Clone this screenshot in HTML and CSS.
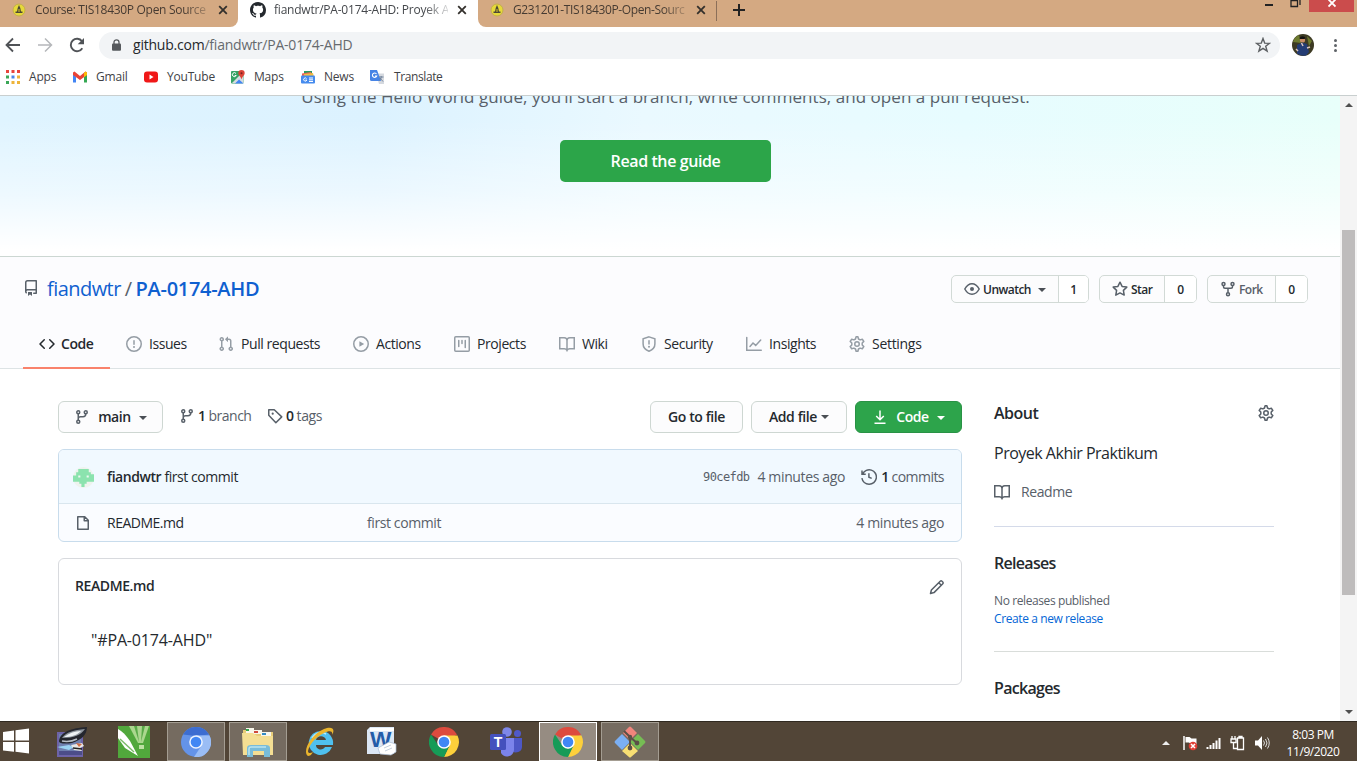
FILE: index.html
```html
<!DOCTYPE html>
<html lang="en">
<head>
<meta charset="utf-8">
<title>fiandwtr/PA-0174-AHD: Proyek Akhir Praktikum</title>
<link rel="stylesheet" href="styles.css">
</head>
<body>
<svg class="defs" aria-hidden="true">
  <symbol id="repo" viewBox="0 0 16 16"><path fill-rule="evenodd" d="M2 2.5A2.5 2.5 0 014.5 0h8.75a.75.75 0 01.75.75v12.5a.75.75 0 01-.75.75h-2.5a.75.75 0 110-1.5h1.75v-2h-8a1 1 0 00-.714 1.7.75.75 0 01-1.072 1.05A2.495 2.495 0 012 11.5v-9zm10.5-1V9h-8c-.356 0-.694.074-1 .208V2.5a1 1 0 011-1h8zM5 12.25v3.25a.25.25 0 00.4.2l1.45-1.087a.25.25 0 01.3 0L8.6 15.7a.25.25 0 00.4-.2v-3.25a.25.25 0 00-.25-.25h-3.5a.25.25 0 00-.25.25z"/></symbol>
  <symbol id="code" viewBox="0 0 16 16"><path d="M4.72 3.22a.75.75 0 011.06 1.06L2.06 8l3.72 3.72a.75.75 0 11-1.06 1.06L.47 8.53a.75.75 0 010-1.06l4.25-4.25zm6.56 0a.75.75 0 10-1.06 1.06L13.94 8l-3.72 3.72a.75.75 0 101.06 1.06l4.25-4.25a.75.75 0 000-1.06l-4.25-4.25z"/></symbol>
  <symbol id="issue" viewBox="0 0 16 16"><path fill-rule="evenodd" d="M8 1.5a6.5 6.5 0 100 13 6.5 6.5 0 000-13zM0 8a8 8 0 1116 0A8 8 0 010 8zm9 3a1 1 0 11-2 0 1 1 0 012 0zm-.25-6.25a.75.75 0 00-1.5 0v3.5a.75.75 0 001.5 0v-3.5z"/></symbol>
  <symbol id="pull" viewBox="0 0 16 16"><path fill-rule="evenodd" d="M7.177 3.073L9.573.677A.25.25 0 0110 .854v4.792a.25.25 0 01-.427.177L7.177 3.427a.25.25 0 010-.354zM3.75 2.5a.75.75 0 100 1.5.75.75 0 000-1.5zm-2.25.75a2.25 2.25 0 113 2.122v5.256a2.251 2.251 0 11-1.5 0V5.372A2.25 2.25 0 011.5 3.25zM11 2.5h-1V4h1a1 1 0 011 1v5.628a2.251 2.251 0 101.5 0V5A2.5 2.5 0 0011 2.5zm1 10.25a.75.75 0 111.5 0 .75.75 0 01-1.5 0zM3.75 12a.75.75 0 100 1.5.75.75 0 000-1.5z"/></symbol>
  <symbol id="play" viewBox="0 0 16 16"><circle class="ln" cx="8" cy="8" r="7.25"/><path d="M6.4 5.2v5.6L11.2 8z"/></symbol>
  <symbol id="project" viewBox="0 0 16 16"><rect class="ln" x=".75" y=".75" width="14.5" height="14.5" rx="1"/><path class="ln" stroke-linecap="round" d="M4.75 4.5v6M8 4.5v3M11.25 4.5v7"/></symbol>
  <symbol id="book" viewBox="0 0 16 16"><path class="ln" d="M.75 1.75h4.5A2.75 2.75 0 018 4.5a2.75 2.75 0 012.75-2.75h4.5v11h-4.5c-1.2 0-2.2.6-2.75 1.75-.55-1.15-1.55-1.75-2.75-1.75H.75zM8 4.5v10"/></symbol>
  <symbol id="shield" viewBox="0 0 16 16"><path class="ln" d="M8 .9l5.900 1.900V8c0 3.300-2 5.700-5.900 7.200C4.100 13.700 2.100 11.300 2.100 8V2.800z"/><path class="ln" stroke-linecap="round" d="M8 4.700v3.300"/><circle cx="8" cy="10.700" r="1"/></symbol>
  <symbol id="graph" viewBox="0 0 16 16"><path class="ln" stroke-linecap="round" d="M.75 1.500v12.750h14.500M4 10.500L7 7l2.700 2.400 5-5.400"/></symbol>
  <symbol id="gear" viewBox="0 0 16 16"><path class="ln" stroke-linejoin="round" d="M7.100.8h1.800l.6 2.200 1.600.9 2.200-.6 1.500 2.100L13.200 7v2l1.600 1.600-1.500 2.100-2.200-.6-1.600.9-.6 2.200H7.100L6.500 13l-1.600-.9-2.200.6-1.500-2.100L2.800 9V7L1.200 5.400l1.500-2.100 2.200.6L6.500 3z"/><circle class="ln" cx="8" cy="8" r="2.250"/></symbol>
  <symbol id="eye" viewBox="0 0 16 16"><path class="ln" d="M.8 8C2.500 4.900 5 2.750 8 2.750S13.500 4.900 15.200 8c-1.700 3.100-4.200 5.250-7.200 5.250S2.500 11.100.8 8z"/><circle cx="8" cy="8" r="2"/></symbol>
  <symbol id="star" viewBox="0 0 16 16"><path class="ln" stroke-linejoin="round" d="M8 1.200l2.100 4.200 4.700.7-3.400 3.300.8 4.700L8 11.900l-4.200 2.200.8-4.700L1.200 6.100l4.700-.7z"/></symbol>
  <symbol id="fork" viewBox="0 0 16 16"><path class="ln" d="M3.500 4.500v1.250c0 .8.700 1.500 1.500 1.500h6c.8 0 1.500-.7 1.500-1.500V4.500M8 7.500v4.250"/><circle class="ln" cx="3.500" cy="2.900" r="1.500"/><circle class="ln" cx="12.500" cy="2.900" r="1.500"/><circle class="ln" cx="8" cy="13.300" r="1.500"/></symbol>
  <symbol id="branch" viewBox="0 0 16 16"><path class="ln" d="M4.250 4.800v6.400M11.750 4.800c0 2-1 3-2.750 3H6.500c-1.500 0-2.250.8-2.250 2"/><circle class="ln" cx="4.250" cy="3.250" r="1.500"/><circle class="ln" cx="11.750" cy="3.250" r="1.500"/><circle class="ln" cx="4.250" cy="12.750" r="1.500"/></symbol>
  <symbol id="tag" viewBox="0 0 16 16"><path class="ln" stroke-linejoin="round" d="M1.750 1.750h5.500l7.500 7.100-5.900 5.900-7.100-7.500z"/><circle cx="5.700" cy="5.700" r="1.100"/></symbol>
  <symbol id="history" viewBox="0 0 16 16"><path class="ln" d="M1.700 4.900A7.200 7.200 0 118 15.200 7.200 7.200 0 01.9 9.200M1 1.500v3.750h3.750M7.900 4.200v4l2.800 1.200"/></symbol>
  <symbol id="file" viewBox="0 0 16 16"><path class="ln" stroke-linejoin="round" d="M2.750 1.750v12.500h10.500v-9L9.750 1.750zM9.250 1.750v4h4"/></symbol>
  <symbol id="pencil" viewBox="0 0 16 16"><path class="ln" stroke-linejoin="round" d="M1.500 14.500l.9-3.500 8.800-8.800a1.300 1.300 0 011.800 0l.8.8a1.300 1.300 0 010 1.800L5 13.600zM9.800 3.700l2.500 2.500"/></symbol>
  <symbol id="download" viewBox="0 0 16 16"><path class="ln" d="M8 1.500v9M4.200 7L8 10.700 11.800 7M2.500 14.200h11"/></symbol>
  <symbol id="cat" viewBox="0 0 16 16"><path d="M8 0C3.580 0 0 3.580 0 8c0 3.540 2.290 6.530 5.470 7.590.4.070.55-.17.55-.38 0-.19-.01-.82-.01-1.490-2.010.37-2.530-.49-2.690-.94-.09-.23-.48-.94-.82-1.130-.28-.15-.68-.52-.01-.53.63-.01 1.080.58 1.230.82.720 1.210 1.870.87 2.330.66.070-.52.280-.87.510-1.070-1.780-.2-3.640-.89-3.640-3.950 0-.87.310-1.590.82-2.150-.08-.2-.36-1.020.08-2.120 0 0 .67-.21 2.200.82.640-.18 1.320-.27 2-.27s1.360.09 2 .27c1.530-1.040 2.200-.82 2.200-.82.440 1.100.16 1.920.08 2.120.51.560.82 1.270.82 2.150 0 3.070-1.870 3.750-3.650 3.950.29.250.54.730.54 1.480 0 1.070-.01 1.930-.01 2.200 0 .21.150.46.550.38A8.010 8.010 0 0016 8c0-4.420-3.580-8-8-8z"/></symbol>
  <symbol id="cross" viewBox="0 0 10 10"><path d="M1.200 1.200l7.600 7.600M8.800 1.200L1.200 8.800" stroke="currentColor" stroke-width="1.800"/></symbol>
  <symbol id="campus" viewBox="0 0 14 14"><circle cx="7" cy="7" r="6" fill="#e6d93a" stroke="#c2ae4c"/><path d="M7 2l1.300 3 .7 3.500h1.500V10h-7V8.500H5L5.700 5z" fill="#4c4935"/><path d="M7 6v3" stroke="#d8c62a"/></symbol>
  <symbol id="chrome" viewBox="0 0 30 30"><path d="M15 15L2 7.500A15 15 0 0128 7.500z" fill="#dd4b3e"/><path d="M15 8.500h13.500A15 15 0 0115 30l5.600-11.700z" fill="#fdd03b"/><path d="M2 7.500l7.400 11L15 22l5.600-3.700L15 30A15 15 0 012 7.500z" fill="#169b57"/><circle cx="15" cy="15" r="6.800" fill="#fff"/><circle cx="15" cy="15" r="5.300" fill="#4187f4"/></symbol>
</svg>

<header class="browser">
  <div class="tabstrip">
    <div class="tab first"><svg class="fav"><use href="#campus"/></svg><span class="tab-name">Course: TIS18430P Open Source</span><svg class="x"><use href="#cross"/></svg></div>
    <div class="tab active"><svg class="fav cat"><use href="#cat"/></svg><span class="tab-name">fiandwtr/PA-0174-AHD: Proyek A</span><svg class="x"><use href="#cross"/></svg></div>
    <div class="tab third"><svg class="fav"><use href="#campus"/></svg><span class="tab-name">G231201-TIS18430P-Open-Sourc</span><svg class="x"><use href="#cross"/></svg></div>
    <span class="sep"></span>
    <svg class="plus" viewBox="0 0 12 12"><path d="M6 0v12M0 6h12" stroke="#222" stroke-width="2"/></svg>
    <div class="caption">
      <span class="min"></span>
      <svg class="restore" viewBox="0 0 11 8"><path d="M1 0v6.500h6.500V.5H1M10 0v5" fill="none" stroke="#222" stroke-width="1.300"/></svg>
      <span class="close"><svg viewBox="0 0 8 8"><path d="M.5-.5l7 7M7.500-.5l-7 7" stroke="#fff" stroke-width="1.800"/></svg></span>
    </div>
  </div>
  <div class="toolbar">
    <svg class="nav" viewBox="0 0 16 16"><path d="M15 8H2M8 1.500L1.500 8 8 14.500" fill="none" stroke="#505357" stroke-width="1.800"/></svg>
    <svg class="nav" viewBox="0 0 16 16"><path d="M1 8h13M8 1.500L14.500 8 8 14.500" fill="none" stroke="#b5b7ba" stroke-width="1.500"/></svg>
    <svg class="nav" viewBox="0 0 16 16"><path d="M13.300 11.200A6.200 6.200 0 1113 4.300" fill="none" stroke="#505357" stroke-width="1.900"/><path d="M15 1v6.300H8.700z" fill="#505357"/></svg>
    <div class="omnibox">
      <svg class="lock" viewBox="0 0 9 12"><path d="M2 5V3.300a2.500 2.500 0 015 0V5" fill="none" stroke="#56595d" stroke-width="1.300"/><rect y="4.500" width="9" height="7.300" rx="1" fill="#56595d"/></svg>
      <span class="url">github.com<i>/fiandwtr/PA-0174-AHD</i></span>
      <svg class="fav-star" viewBox="0 0 16 16"><path d="M8 1.500l1.700 4.600 4.900.2-3.900 3 1.400 4.700L8 11.300 3.900 14l1.400-4.700-3.900-3 4.900-.2z" fill="none" stroke="currentColor" stroke-width="1.400"/></svg>
    </div>
    <svg class="profile" viewBox="0 0 22 22"><circle cx="11" cy="11" r="11" fill="#3d3a23"/><path d="M1 8a10 10 0 016-7l2 8zM15 2l5 5-3 5z" fill="#6d7a2f"/><circle cx="10.500" cy="6" r="2.600" fill="#c98d65"/><path d="M7.500 4a3.500 3.500 0 016 0l-1 1H8z" fill="#111"/><path d="M5 11l5-2.500 5 1.500 2 8-3 3.500a11 11 0 01-9-2z" fill="#243c74"/><path d="M9.500 9l1.500 3M4 15l2 2M15 14l3-1" stroke="#dcc5bd" stroke-width="1.500"/></svg>
    <span class="dots"><b></b><b></b><b></b></span>
  </div>
  <nav class="bookmarks">
    <a><svg viewBox="0 0 14 14"><path d="M0 0h3v3H0zM5.500 0h3v3h-3zM11 0h3v3h-3z" fill="#e8453c"/><path d="M0 5.500h3v3H0z" fill="#3aa757"/><path d="M5.500 5.500h3v3h-3z" fill="#4a86e8"/><path d="M11 5.500h3v3h-3zM11 11h3v3h-3zM5.500 11h3v3h-3z" fill="#eeb43a"/><path d="M0 11h3v3H0z" fill="#3aa757"/></svg>Apps</a>
    <a><svg viewBox="0 0 14 14"><path d="M0 3v9.500h3V7z" fill="#4285f4"/><path d="M14 3v9.500h-3V7z" fill="#34a853"/><path d="M0 2.500L1.500 1.500 7 6l5.500-4.500L14 2.500V5L7 10 0 5z" fill="#ea4335"/><path d="M11 3l1.500-1.500L14 2.500V5l-3 2.200z" fill="#fbbc04"/></svg>Gmail</a>
    <a><svg viewBox="0 0 14 14"><rect y="1.500" width="14" height="11" rx="3" fill="#f01818"/><path d="M5.500 4.500v5l4-2.500z" fill="#fff"/></svg>YouTube</a>
    <a><svg viewBox="0 0 14 14"><rect y="1" width="12.500" height="12.500" rx="1" fill="#37a366"/><path d="M1 13L12 2l.5 11.500z" fill="#d7dce0"/><path d="M4 13.500l4-4 4.500 4z" fill="#4285f4"/><path d="M5 3.500a2 2 0 10.200 2H3.700" fill="none" stroke="#fff"/><path d="M10.500 0a3.200 3.200 0 013.200 3.200c0 2-2.600 3.300-3.200 6-.6-2.700-3.200-4-3.200-6A3.200 3.200 0 0110.500 0z" fill="#dc4437"/><circle cx="10.500" cy="3.200" r="1" fill="#722"/></svg>Maps</a>
    <a><svg viewBox="0 0 14 14"><path d="M3 1h8v5H3z" fill="#2b9c62"/><path d="M1 3.500l9-1.500 1 4H1z" fill="#ea6155"/><path d="M3 4l9-1 1 4H3z" fill="#f4bd42"/><rect y="5.500" width="14" height="8" rx="1" fill="#458bee"/><path d="M5.500 8.500a1.600 1.600 0 10.300 1.500H4.500M8 8h4M8 9.800h4M8 11.500h4" fill="none" stroke="#fff"/></svg>News</a>
    <a><svg viewBox="0 0 14 14"><path d="M6 3.500h8V14H9z" fill="#d5d9df"/><path d="M0 0h7l4 11H1.500A1.500 1.500 0 010 9.500z" fill="#4784e5"/><path d="M6.500 4a2.200 2.200 0 10.200 2H5" fill="none" stroke="#fff" stroke-width="1.100"/><path d="M9 7h4.500M11.200 6v1c0 2-1 3-2 3.500M10 8l3 3.500" fill="none" stroke="#71839b"/></svg>Translate</a>
  </nav>
</header>

<div class="viewport">
  <main class="page">
    <section class="hero">
      <p>Using the Hello World guide, you’ll start a branch, write comments, and open a pull request.</p>
      <a class="guide">Read the guide</a>
    </section>
    <section class="repohead">
      <div class="titlebar">
        <h1><svg class="ic"><use href="#repo"/></svg><a>fiandwtr</a><span class="slash">/</span><b>PA-0174-AHD</b></h1>
        <div class="social">
          <div class="pair watch"><span><svg class="ic"><use href="#eye"/></svg><em>Unwatch</em><i class="caret"></i></span><strong>1</strong></div>
          <div class="pair starred"><span><svg class="ic"><use href="#star"/></svg><em>Star</em></span><strong>0</strong></div>
          <div class="pair forked"><span><svg class="ic"><use href="#fork"/></svg><em>Fork</em></span><strong>0</strong></div>
        </div>
      </div>
      <nav class="repotabs">
        <a class="on"><svg class="ic"><use href="#code"/></svg>Code</a>
        <a><svg class="ic"><use href="#issue"/></svg>Issues</a>
        <a><svg class="ic"><use href="#pull"/></svg>Pull requests</a>
        <a><svg class="ic"><use href="#play"/></svg>Actions</a>
        <a><svg class="ic"><use href="#project"/></svg>Projects</a>
        <a><svg class="ic"><use href="#book"/></svg>Wiki</a>
        <a><svg class="ic"><use href="#shield"/></svg>Security</a>
        <a><svg class="ic"><use href="#graph"/></svg>Insights</a>
        <a><svg class="ic"><use href="#gear"/></svg>Settings</a>
      </nav>
    </section>
    <div class="columns">
      <div class="files">
        <div class="actions">
          <a class="btn main"><svg class="ic"><use href="#branch"/></svg>main<i class="caret"></i></a>
          <span class="stat branches"><svg class="ic"><use href="#branch"/></svg><b>1</b> branch</span>
          <span class="stat"><svg class="ic"><use href="#tag"/></svg><b>0</b> tags</span>
          <a class="btn goto">Go to file</a>
          <a class="btn add">Add file<i class="caret"></i></a>
          <a class="btn green"><svg class="ic"><use href="#download"/></svg>Code<i class="caret"></i></a>
        </div>
        <div class="box">
          <div class="commit">
            <svg class="avatar" viewBox="0 0 20 20"><circle cx="10" cy="10" r="10" fill="#eef3ee"/><path d="M5 2h10v3h2v2h3v7h-7v2h-2v3H8v-3H6v-2H0V8h3V5h2z" fill="#8be3ae"/><path d="M5 8h2v2H5zM13 8h2v2h-2z" fill="#eef8f2"/></svg>
            <span class="msg"><b>fiandwtr</b> first commit</span>
            <span class="sha">90cefdb</span>
            <span class="ago">4 minutes ago</span>
            <span class="count"><svg class="ic"><use href="#history"/></svg><b>1</b> commits</span>
          </div>
          <div class="row">
            <svg class="ic"><use href="#file"/></svg>
            <span class="name">README.md</span>
            <span class="note">first commit</span>
            <span class="ago">4 minutes ago</span>
          </div>
        </div>
        <article class="readme">
          <header><b>README.md</b><svg class="ic"><use href="#pencil"/></svg></header>
          <p>"#PA-0174-AHD"</p>
        </article>
      </div>
      <aside class="side">
        <section class="about">
          <h2>About<svg class="ic"><use href="#gear"/></svg></h2>
          <p>Proyek Akhir Praktikum</p>
          <a><svg class="ic"><use href="#book"/></svg>Readme</a>
        </section>
        <section class="releases">
          <h2>Releases</h2>
          <p>No releases published</p>
          <a>Create a new release</a>
        </section>
        <section class="packages"><h2>Packages</h2></section>
      </aside>
    </div>
  </main>
  <div class="scroll"><i class="up"></i><span class="thumb"></span><i class="down"></i></div>
</div>

<footer class="taskbar">
  <svg class="start" viewBox="0 0 28 26"><path d="M1 4l11-1.500v10H1zM13.500 2.300L27 .5v12H13.500zM1 14h11v9.800L1 22.400zM13.500 14H27v11.500l-13.500-1.700z" fill="#fff"/></svg>
  <div class="apps">
    <span><svg viewBox="0 0 32 32"><path d="M1 6h26v25H1z" fill="#6d63a8"/><path d="M3 8h22v21H3z" fill="#6f7fae"/><path d="M3 25h23v4H3z" fill="#4c4d88"/><path d="M3 15C4 6 15 2 31 1c0 8-6 13-15 16-6 1-13 1-13-2z" fill="#24262e"/><path d="M6 12C10 6 18 4 29 3c-4 6-11 9-23 9z" fill="#8f979f"/><path d="M8 11c5-4 11-6 17-6-4 4-9 6-17 6z" fill="#eef2f5"/><path d="M6 15c5 1 11 0 15-2" fill="none" stroke="#b8bec6" stroke-width="1.500"/><path d="M1 21l12-2 5 2-5 3z" fill="#9bd3f3"/><path d="M15 19l11-2 2 3-4 2 2 3-8-1z" fill="#e9e7e5"/><path d="M20 17l6 1-3 3z" fill="#ce6c42"/><path d="M17 22l9 1" stroke="#222" stroke-width="1.500"/></svg></span>
    <span><svg viewBox="0 0 32 32"><path d="M0 0h32v32H0z" fill="#51a83c"/><path d="M11 0h20l-6 17h-5z" fill="#abd78e"/><path d="M16 0h3l2 16zM24 0h3l-4 16z" fill="#5aaa49"/><path d="M21 19h5v4h-5z" fill="#bde0a4"/><path d="M0 3c4 2 8 6 12 12l8 15L7 22 0 12z" fill="#fff"/><path d="M2 13l14 13" stroke="#7cbb69" stroke-width="1.500"/></svg></span>
    <span class="open"><svg class="c30" viewBox="0 0 30 30"><circle cx="15" cy="15" r="15" fill="#6493e8"/><path d="M2 7.500A15 15 0 0128 7.500L15 9z" fill="#3c6dd1"/><path d="M15 8.500h13.500A15 15 0 0113 30l7.600-11.500z" fill="#9abdf5"/><circle cx="15" cy="15" r="6.800" fill="#eef4ff"/><circle cx="15" cy="15" r="5.300" fill="#4187f4"/></svg></span>
    <span class="open"><svg viewBox="0 0 32 32"><path d="M1 4h14l3 2h13v23H1z" fill="#e8cd78"/><path d="M4 2h8v6H4zM12 4h8v4h-8zM19 6h10v5H19z" fill="#f8f5e9"/><path d="M4 3h3v2H4z" fill="#31a64a"/><path d="M12 5h4v2h-4z" fill="#d14a3b"/><path d="M20 7h4v2h-4z" fill="#348cc5"/><path d="M0 7h11l4 3h16v19H1z" fill="#f4de93"/><path d="M5 31V22q0-3 4-3h15q4 0 4 3v9h-6v-6H11v6z" fill="#78bcd9"/><path d="M7 29v-6q0-2 2-2h15" fill="none" stroke="#b9e4ef" stroke-width="1.500"/></svg></span>
    <span><svg viewBox="0 0 32 32"><path fill-rule="evenodd" d="M17 5a12 12 0 0112 14H12c0 5 7 6 9 2h7a12 12 0 11-11-16zm-5 9h10c-1-5-9-5-10 0z" fill="#4fc0ee"/><path d="M8 12c3-5 9-7 14-4" fill="none" stroke="#b5ebff" stroke-width="1.500"/><path d="M4 30C-2 26 6 9 20 3c7-3 12-1 8 6 1-4-2-5-8-2C10 12 5 20 4 25c0 3 3 2 5 1-2 3-3 4-5 4z" fill="#ebb52d"/></svg></span>
    <span><svg viewBox="0 0 32 32"><path d="M4 1h24v27H1V4z" fill="#dce7f5"/><path d="M4 2h24v3H4z" fill="#fff"/><text x="4" y="21" font-family="Liberation Sans" font-weight="700" font-size="22" fill="#245ca8" textLength="21" lengthAdjust="spacingAndGlyphs">W</text><path d="M12 22l11-6 7 2v8l-5 3-11-1z" fill="#fff" stroke="#a8bad3" stroke-width=".7"/><path d="M18 22l7-3M19 25l7-3" stroke="#c5d0dd"/></svg></span>
    <span><svg class="c30"><use href="#chrome"/></svg></span>
    <span><svg viewBox="0 0 32 32"><circle cx="17" cy="6" r="4.800" fill="#7f87e9"/><circle cx="27.500" cy="7.500" r="3.500" fill="#5059c9"/><path d="M18 12h14v9a6 6 0 01-10 4z" fill="#4d57c6"/><path d="M11 12h13v12a7 7 0 01-13 3z" fill="#7b83eb"/><rect y="8" width="16" height="16" rx="1.500" fill="#4450bd"/><text x="3.700" y="21" font-family="Liberation Sans" font-size="14" font-weight="700" fill="#fff">T</text></svg></span>
    <span class="open current"><svg class="c30"><use href="#chrome"/></svg></span>
    <span class="open"><svg viewBox="0 0 32 32"><path d="M15 1q1-1 2 0l6 6-7 7-7-7z" fill="#f0857c"/><path d="M8 8l8 8-8 8-7-7q-1-1 0-2z" fill="#7baff3"/><path d="M24 8l7 7q1 1 0 2l-7 7-8-8z" fill="#76bd54"/><path d="M16 17l8 8-7 6q-1 1-2 0l-7-6z" fill="#f8df73"/><path d="M10 5l6 6v12M16 11l7 6" fill="none" stroke="#5b5047" stroke-width="2"/><circle cx="16" cy="22" r="2.400" fill="#5b5047"/><circle cx="23" cy="17" r="2.400" fill="#5b5047"/><circle cx="16" cy="11" r="2.200" fill="#5b5047"/></svg></span>
  </div>
  <div class="tray">
    <i class="hidden-icons"></i>
    <svg viewBox="0 0 16 16"><path d="M2 1v14" stroke="#fff" stroke-width="1.500"/><path d="M3.500 2h4l2 1.500h5V9H9L7 7.500H3.500z" fill="#fff"/><circle cx="11" cy="11" r="4.300" fill="#df3e34"/><path d="M9 9l4 4M13 9l-4 4" stroke="#fff" stroke-width="1.500"/></svg>
    <svg viewBox="0 0 16 16"><path d="M1.500 14v-2M4.500 14v-4M7.500 14V8M10.500 14V5.500M13.500 14V3" stroke="#fff" stroke-width="2"/></svg>
    <svg viewBox="0 0 16 16"><path d="M2 1v3M5 1v3M1 4h5v3.500H1zM3.500 7v6.500H8M7.500 3h6v11.500h-6zM9 3V1.500h3V3" fill="none" stroke="#fff" stroke-width="1.300"/></svg>
    <svg viewBox="0 0 16 16"><path d="M1 5.500h3L8 1v14l-4-4.500H1z" fill="#fff"/><path d="M9.500 5.500q2 2.500 0 5M11.500 4q3 4 0 8M13.500 2.500q3.500 5.500 0 11" fill="none" stroke="#ddd"/></svg>
    <time><span>8:03 PM</span><span>11/9/2020</span></time>
  </div>
</footer>
</body>
</html>
```
FILE: styles.css
```css
* { box-sizing: border-box; }
body { margin: 0; width: 1357px; height: 761px; overflow: hidden; display: flex; flex-direction: column; background: #fff; color: #24292e; font: 14px/20px "Open Sans", "Noto Sans", sans-serif; letter-spacing: -.4px; white-space: nowrap; }
.defs { display: none; }
svg { flex: none; display: block; }
h1, h2, p { margin: 0; font-weight: 400; }
b, strong { font-weight: 600; }
i, em { font-style: normal; }
.ic { width: 16px; height: 16px; fill: currentColor; color: #586069; }
.ln { fill: none; stroke: currentColor; stroke-width: 1.5; }
.caret { width: 0; height: 0; border: 4px solid transparent; border-top-color: currentColor; border-bottom: 0; }

/* browser window */
.browser { flex: none; height: 96px; border-bottom: 1px solid #c9cfcf; }
.tabstrip { display: flex; height: 27px; background: #fff; }
.tab { display: flex; align-items: flex-start; padding-left: 12px; background: #d4a982; font-size: 12px; line-height: 20px; color: #463b32; }
.tab.first { width: 238px; border-radius: 0 0 8px 0; }
.tab.active { width: 240px; background: #fff; color: #45484c; }
.tab.third { width: 238px; border-radius: 0 0 0 8px; }
.fav { width: 14px; height: 14px; margin: 3px 9px 0 0; }
.fav.cat { width: 16px; height: 16px; margin: 2px 8px 0 0; fill: #24292e; }
.tab-name { width: 174px; letter-spacing: -.3px; -webkit-mask-image: linear-gradient(90deg, #000 86%, rgba(0,0,0,.2)); mask-image: linear-gradient(90deg, #000 86%, rgba(0,0,0,.2)); }
.active .tab-name { letter-spacing: -.22px; }
.third .tab-name { letter-spacing: -.38px; }
.x { width: 10px; height: 10px; margin: 5px 0 0 9px; color: #33302c; }
.sep { width: 17px; background: #d4a982; display: block; padding: 1px 0; }
.sep::after { content: ""; display: block; width: 1px; height: 20px; background: #8b6f59; }
.plus { width: 29px; height: 27px; padding: 4px 17px 11px 0; background: #d4a982; }
.caption { flex: 1; display: flex; justify-content: flex-end; background: #d4a982; padding-right: 3px; }
.min { width: 8px; height: 2px; margin: 4px 17px 0 0; background: #222; }
.restore { width: 11px; height: 8px; margin-right: 8px; }
.close { width: 45px; height: 12px; background: #cb4c4c; padding: 0 0 0 19px; }
.close svg { width: 8px; height: 8px; }
.toolbar { display: flex; align-items: center; height: 37px; padding: 0 0 1px 5px; }
.nav { width: 16px; height: 16px; margin-right: 16px; }
.omnibox { display: flex; align-items: center; width: 1181px; height: 27px; padding: 0 9px 0 13px; border-radius: 14px; background: #f2f4f6; }
.nav + .omnibox { margin-left: -2px; }
.lock { width: 9px; height: 12px; margin-right: 12px; }
.url { flex: 1; color: #25282b; letter-spacing: -.22px; }
.url i { color: #666a6e; }
.fav-star { width: 16px; height: 16px; color: #5d6063; }
.profile { width: 22px; height: 22px; margin-left: 12px; }
.dots { display: grid; gap: 2px; margin-left: 20px; }
.dots b { width: 3px; height: 3px; border-radius: 50%; background: #5f6368; }
.bookmarks { display: grid; grid-template-columns: 67px 71px 87px 70px 69px 90px; height: 31px; padding: 0 0 5px 6px; align-items: center; font-size: 12px; letter-spacing: -.2px; color: #3f4246; }
.bookmarks a { display: flex; align-items: center; gap: 9px; }
.bookmarks a:last-child { gap: 10px; letter-spacing: -.4px; }
.bookmarks svg { width: 14px; height: 14px; }

/* repository page */
.viewport { flex: 1; display: flex; min-height: 0; overflow: hidden; }
.page { width: 1340px; }
.hero { display: flex; flex-direction: column; align-items: center; height: 161px; padding-right: 9px; border-bottom: 1px solid #ccd7d2; background: linear-gradient(180deg, rgba(255,255,255,0) 15%, rgba(255,255,255,.45) 60%, #fff 96%), linear-gradient(90deg, #dff4ff, #dcf2ff 28%, #eaf9ff 48%, #e7fcff 72%, #e8fffa); overflow: hidden; }
.hero p { margin-top: -14px; height: 30px; line-height: 30px; font-size: 17px; letter-spacing: .05px; color: #586069; }
.guide { width: 211px; height: 42px; margin-top: 28px; border-radius: 5px; background: #2ca549; color: #fff; font-size: 16px; font-weight: 600; line-height: 42px; text-align: center; }
.repohead { height: 112px; background: #fcfcfe; border-bottom: 1px solid #dde3e5; }
.titlebar { display: flex; justify-content: space-between; height: 64px; padding: 18px 32px 0 23px; }
h1 { display: flex; align-items: center; height: 28px; font-size: 20px; letter-spacing: -.55px; color: #0f60d0; }
h1 b { letter-spacing: -.3px; }
h1 .ic { margin: -3px 8px 0 0; }
.slash { color: #586069; margin: 0 4px; }
.social { display: flex; gap: 10px; font-size: 12px; }
.pair { display: flex; height: 28px; border: 1px solid #d2dad6; border-radius: 5px; background: #fcfcfd; overflow: hidden; }
.pair span { flex: 1; display: flex; align-items: center; padding-left: 12px; }
.pair em { margin: 1px 0 0 3px; font-weight: 600; letter-spacing: -.52px; }
.pair strong { width: 32px; border-left: 1px solid #d2dad6; background: #fff; line-height: 27px; text-align: center; }
.pair .caret { margin: 2px 0 0 7px; color: #4a4f55; }
.watch { width: 138px; }
.watch strong { width: 30px; }
.starred { width: 98px; }
.forked { width: 101px; }
.forked em { color: #586069; }
.repotabs { display: grid; grid-template-columns: 87px 92px 135px 101px 105px 82px 105px 103px 100px; padding-left: 23px; height: 48px; }
.repotabs a { display: flex; align-items: center; gap: 7px; padding: 0 0 2px 16px; letter-spacing: -.43px; }
.repotabs a:last-child { letter-spacing: -.3px; }
.repotabs .ic { color: #959da5; }
.repotabs .on { padding: 0 0 0 16px; border-bottom: 2px solid #f9826c; font-weight: 600; gap: 6px; }
.repotabs .on .ic { color: #24292e; }
.columns { display: flex; gap: 32px; padding: 32px 66px 0 58px; }
.files { width: 904px; }
.actions { display: flex; height: 32px; }
.btn { display: flex; align-items: center; justify-content: center; height: 32px; border: 1px solid #ced7d2; border-radius: 6px; background: #fcfcfd; font-weight: 600; }
.btn .caret { color: #4a4f55; margin-top: 2px; }
.btn.main { width: 105px; gap: 8px; }
.stat { display: flex; align-items: center; height: 30px; color: #586069; }
.stat b { color: #24292e; margin: 0 3px; }
.branches { width: 71px; margin: 0 17px 0 16px; letter-spacing: -.5px; }
.goto { width: 93px; margin: 0 8px 0 auto; }
.add { width: 96px; gap: 4px; margin-right: 8px; }
.btn.add .caret { margin-top: -1px; }
.btn.green { width: 107px; gap: 8px; border-color: #299245; background: #2da44b; color: #fff; }
.green .ic, .btn.green .caret { color: #fff; }
.box { margin-top: 16px; border: 1px solid #c8dcec; border-radius: 6px; background: #fafcff; }
.commit { display: flex; align-items: center; height: 54px; padding: 1px 17px 0 14px; background: #f1f9ff; border-bottom: 1px solid #d9e6ee; border-radius: 5px 5px 0 0; }
.avatar { width: 21px; height: 21px; margin-right: 13px; }
.msg { flex: 1; letter-spacing: -.44px; }
.sha { font: 12px "DejaVu Sans Mono", monospace; letter-spacing: -.6px; color: #586069; margin-right: 8px; }
.ago { color: #586069; letter-spacing: -.35px; }
.count { display: flex; color: #586069; margin-left: 16px; align-items: center; letter-spacing: -.55px; }
.count b { margin: 0 3px 0 4px; color: #24292e; }
.row { display: flex; align-items: center; height: 37px; padding: 0 17px 0 16px; }
.name { width: 260px; margin-left: 16px; letter-spacing: -.5px; }
.note { flex: 1; color: #586069; }
.readme { height: 127px; margin-top: 16px; border: 1px solid #d8dade; border-radius: 6px; padding: 0 16px; }
.readme header { display: flex; align-items: center; justify-content: space-between; height: 56px; }
.readme header b { margin-top: -2px; }
.readme p { padding: 15px 16px 0; font-size: 16px; letter-spacing: -.15px; }
.side { width: 280px; }
h2 { display: flex; justify-content: space-between; align-items: center; height: 24px; font-size: 16px; font-weight: 600; letter-spacing: -.7px; }
.about { height: 126px; border-bottom: 1px solid #d4dae9; }
.about h2 { letter-spacing: -.5px; }
.about p { font-size: 16px; letter-spacing: -.5px; line-height: 24px; margin-top: 16px; }
.about a { display: flex; align-items: center; gap: 11px; margin-top: 17px; color: #586069; }
.releases { height: 125px; padding-top: 24px; border-bottom: 1px solid #d9ddda; font-size: 12px; line-height: 18px; color: #586069; }
.releases h2 { color: #24292e; }
.releases p { margin-top: 17px; }
.releases a { color: #0366d6; }
.packages { padding-top: 24px; }
.scroll { width: 17px; background: #f4f4f4; display: flex; flex-direction: column; align-items: center; }
.scroll i { border: 4px solid transparent; }
.scroll .up { border-top: 0; border-bottom-color: #505050; margin-top: 7px; }
.thumb { width: 13px; height: 365px; margin: 123px 0 115px; background: #bebcbc; }
.scroll .down { border-bottom: 0; border-top-color: #505050; }

/* Windows taskbar */
.taskbar { flex: none; display: flex; height: 40px; background: #524537; border-top: 1px solid #302920; color: #fff; }
.start { width: 28px; height: 26px; margin: 6px 13px 0 2px; }
.apps { display: flex; gap: 4px; }
.apps span { width: 58px; height: 39px; display: grid; place-items: center; border: 1px solid transparent; }
.apps svg { width: 32px; height: 32px; }
.apps .open { background: #756b60; border-color: #a49d92; }
.apps .current { background: #968c82; border-color: #fff; }
.apps .c30 { width: 30px; height: 30px; }
.tray { flex: 1; display: flex; align-items: center; justify-content: flex-end; gap: 8px; padding: 2px 18px 0 0; }
.tray svg { width: 16px; height: 16px; }
.hidden-icons { border: 4px solid transparent; border-top: 0; border-bottom-color: #eee; margin-right: 4px; }
time { display: flex; flex-direction: column; align-items: center; width: 52px; margin-left: 9px; font-size: 12px; line-height: 17px; letter-spacing: -.45px; }
```
